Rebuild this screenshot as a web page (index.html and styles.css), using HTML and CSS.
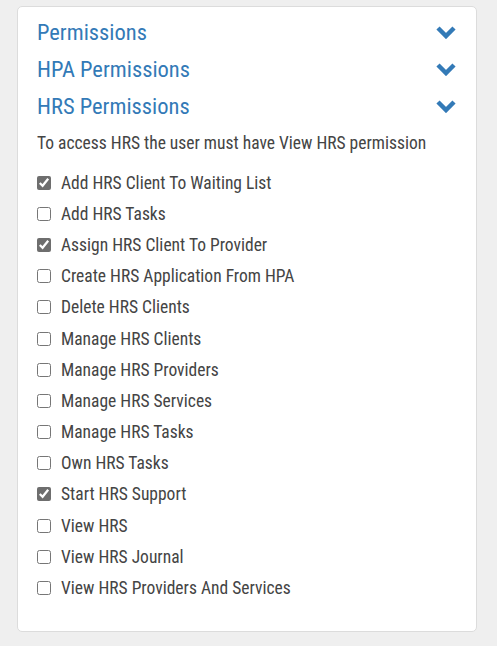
FILE: index.html
```html
<!DOCTYPE html>
<html lang="en">

<head>
    <meta charset="UTF-8">
    <title>Permissions</title>
    <link rel="stylesheet" href="styles.css">
</head>

<body>
    <div class="panel">
        <!-- collapsible groups -->
        <div class="group-head">
            <span>Permissions</span>
            <svg class="chevron" viewBox="0 0 22 14"><polyline points="3,3 11,11 19,3" /></svg>
        </div>
        <div class="group-head">
            <span>HPA Permissions</span>
            <svg class="chevron" viewBox="0 0 22 14"><polyline points="3,3 11,11 19,3" /></svg>
        </div>
        <div class="group-head">
            <span>HRS Permissions</span>
            <svg class="chevron" viewBox="0 0 22 14"><polyline points="3,3 11,11 19,3" /></svg>
        </div>

        <p class="note">To access HRS the user must have View HRS permission</p>

        <ul class="perm-list">
            <li><label><input type="checkbox" checked> Add HRS Client To Waiting List</label></li>
            <li><label><input type="checkbox"> Add HRS Tasks</label></li>
            <li><label><input type="checkbox" checked> Assign HRS Client To Provider</label></li>
            <li><label><input type="checkbox"> Create HRS Application From HPA</label></li>
            <li><label><input type="checkbox"> Delete HRS Clients</label></li>
            <li><label><input type="checkbox"> Manage HRS Clients</label></li>
            <li><label><input type="checkbox"> Manage HRS Providers</label></li>
            <li><label><input type="checkbox"> Manage HRS Services</label></li>
            <li><label><input type="checkbox"> Manage HRS Tasks</label></li>
            <li><label><input type="checkbox"> Own HRS Tasks</label></li>
            <li><label><input type="checkbox" checked> Start HRS Support</label></li>
            <li><label><input type="checkbox"> View HRS</label></li>
            <li><label><input type="checkbox"> View HRS Journal</label></li>
            <li><label><input type="checkbox"> View HRS Providers And Services</label></li>
        </ul>
    </div>
</body>

</html>
```

FILE: styles.css
```css
/* Global styles */
* {
    margin: 0;
    padding: 0;
    box-sizing: border-box;
}

body {
    font-family: Roboto, "Liberation Sans", sans-serif;
    font-stretch: 75%;
    background-color: #efefef;
    padding: 6px 20px 15px 17px;
}

.panel {
    background-color: #fff;
    border: 1px solid #dcdcdc;
    border-radius: 5px;
    padding: 6px 19px 27px 19px;
}

/* Group headers */
.group-head {
    display: flex;
    justify-content: space-between;
    align-items: center;
    height: 37px;
    font-size: 22.5px;
    color: #337ab7;
}

.chevron {
    width: 22px;
    height: 14px;
}

.chevron polyline {
    fill: none;
    stroke: #337ab7;
    stroke-width: 4.5;
}

.note {
    font-size: 17.5px;
    color: #444;
    margin-top: 9px;
    margin-bottom: 14px;
}

/* Permission list */
.perm-list {
    list-style: none;
}

.perm-list li {
    height: 31.2px;
    display: flex;
    align-items: center;
}

.perm-list label {
    display: flex;
    align-items: center;
    font-size: 17.5px;
    color: #444;
}

.perm-list input {
    width: 14px;
    height: 14px;
    margin-right: 10px;
    accent-color: #6e6e6e;
}
```
